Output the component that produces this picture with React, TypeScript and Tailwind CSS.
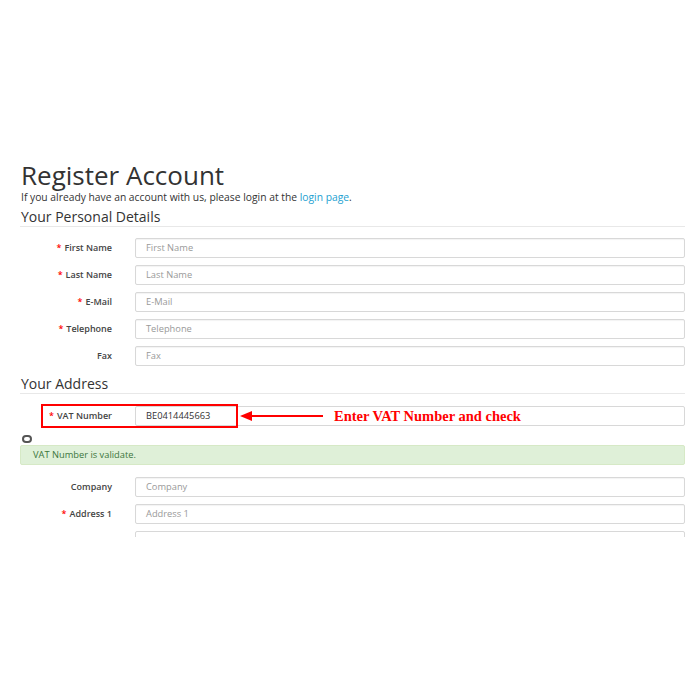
import React from "react";

type Field = { label: string; required?: boolean; placeholder?: string };

const personal: Field[] = [
  { label: "First Name", required: true },
  { label: "Last Name", required: true },
  { label: "E-Mail", required: true },
  { label: "Telephone", required: true },
  { label: "Fax" },
];

const FormRow: React.FC<{ field: Field }> = ({ field }) => (
  <div className="flex items-center h-[20px]">
    <label className="w-[115px] shrink-0 pr-[23px] text-right text-[9px] font-semibold text-[#444]">
      {field.required && <span className="text-[#f00] mr-[3px]">*</span>}
      {field.label}
    </label>
    <div className="flex-1 h-[20px] rounded-[2px] border border-[#d8d8d8] bg-white flex items-center px-[10px] text-[9.3px] text-[#999] shadow-[inset_0_1px_1px_rgba(0,0,0,0.05)]">
      {field.placeholder ?? field.label}
    </div>
  </div>
);

const Legend: React.FC<{ children: React.ReactNode }> = ({ children }) => (
  <div className="border-b border-[#e8e8e8] pb-[1px] text-[14px] leading-[16px] text-[#333] pl-[1px]">
    {children}
  </div>
);

export default function App() {
  return (
    <div className="w-[700px] h-[700px] bg-white overflow-hidden font-['Open_Sans',sans-serif]">
      <div className="pt-[161px] pl-[20px] pr-[15px] h-[537px] overflow-hidden">
        <h1 className="text-[26px] leading-[28px] text-[#333] pl-[1px]">Register Account</h1>
        <p className="mt-[2px] text-[10.3px] leading-[12px] text-[#333] pl-[1px]">
          If you already have an account with us, please login at the{" "}
          <span className="text-[#23a1d1]">login page</span>.
        </p>
        <div className="mt-[6px]">
          <Legend>Your Personal Details</Legend>
        </div>
        <div className="mt-[11px] flex flex-col gap-[7px]">
          {personal.map((f) => (
            <FormRow key={f.label} field={f} />
          ))}
        </div>
        <div className="mt-[10px]">
          <Legend>Your Address</Legend>
        </div>

        <div className="relative mt-[12px] flex items-center h-[20px]">
          <label className="w-[115px] shrink-0 pr-[23px] text-right text-[9px] font-semibold text-[#444]">
            <span className="text-[#f00] mr-[3px]">*</span>VAT Number
          </label>
          <div className="flex-1 h-[20px] rounded-[2px] border border-[#d8d8d8] bg-white flex items-center px-[10px] text-[9.3px] text-[#333]">
            BE0414445663
          </div>
          <div className="absolute left-[21px] top-[-2px] w-[197px] h-[24px] border-2 border-[#f00]" />
          <div className="absolute left-[220px] top-[5px] flex items-center">
            <svg width="84" height="10" viewBox="0 0 84 10">
              <polygon points="0,5 12,0 12,10" fill="#f00" />
              <line x1="10" y1="5" x2="83" y2="5" stroke="#f00" strokeWidth="2" />
            </svg>
            <span className="ml-[10px] font-['Liberation_Serif',serif] font-bold text-[14.5px] leading-[10px] text-[#f00]">
              Enter VAT Number and check
            </span>
          </div>
        </div>

        <div className="mt-[9px] ml-[2px] w-[10px] h-[8px] rounded-full border-2 border-[#555]" />

        <div className="mt-[2px] h-[20px] rounded-[2px] border border-[#d6e9c6] bg-[#dff0d8] flex items-center px-[12px] text-[9.3px] text-[#3c763d]">
          VAT Number is validate.
        </div>

        <div className="mt-[12px] flex flex-col gap-[7px]">
          <FormRow field={{ label: "Company" }} />
          <FormRow field={{ label: "Address 1", required: true }} />
          <div className="flex items-center h-[20px]">
            <div className="w-[115px] shrink-0" />
            <div className="flex-1 h-[20px] rounded-[2px] border border-[#d8d8d8] bg-white" />
          </div>
        </div>
      </div>
    </div>
  );
}
